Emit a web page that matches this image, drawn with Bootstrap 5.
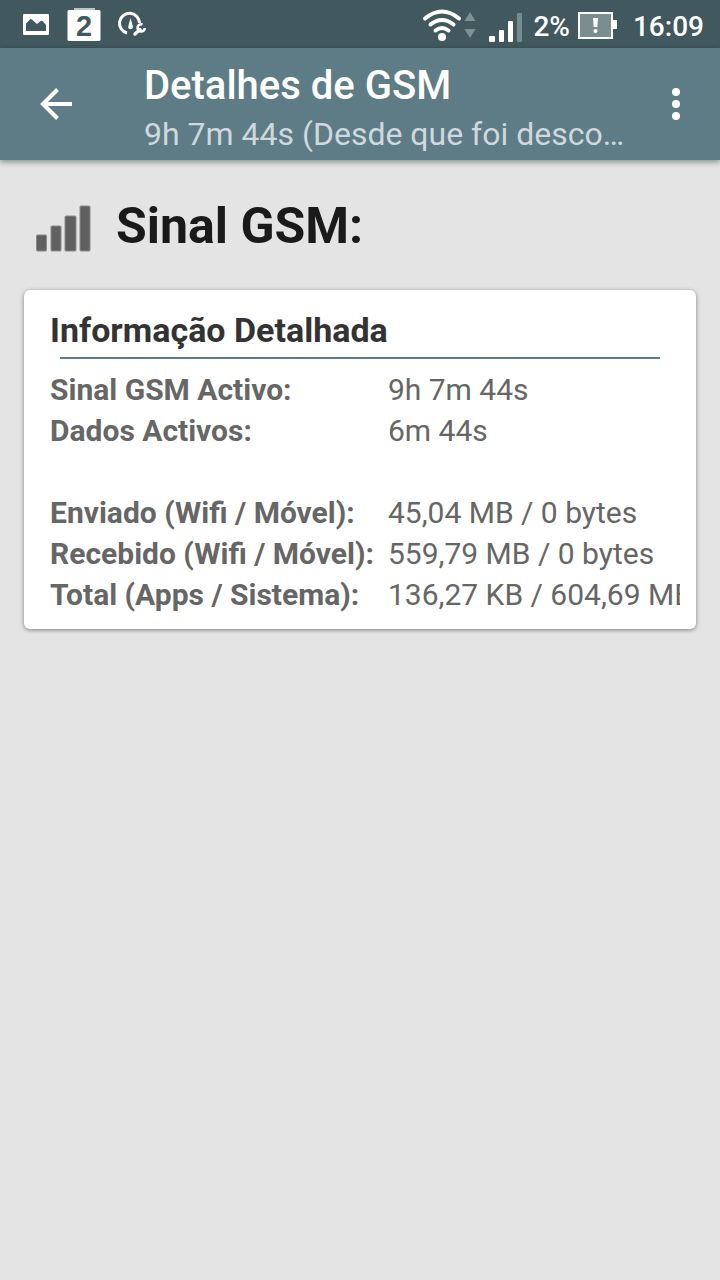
<!DOCTYPE html>
<html lang="pt">
<head>
<meta charset="utf-8">
<meta name="viewport" content="width=device-width, initial-scale=1">
<title>Detalhes de GSM</title>
<link href="https://cdn.jsdelivr.net/npm/bootstrap@5.3.0/dist/css/bootstrap.min.css" rel="stylesheet">
<style>
  body { background: #e4e4e4; font-family: Roboto, "Liberation Sans", sans-serif; color: #666; }
  svg { display: block; flex: none; }
  .status-bar { background: #40585e; color: #fff; height: 48px; padding: 0 16px 0 20px; font-size: 28px; font-weight: 500; }
  .status-text { line-height: 42px; padding-top: 6px; }
  .status-time { margin-left: 15px; }
  .app-bar { background: #5e7c86; height: 112px; box-shadow: 0 2px 6px rgba(0,0,0,.4); padding: 0 16px 0 24px; }
  .icon-btn { padding: 8px; color: #fff; background: none; border: 0; }
  .app-titles { margin-left: 56px; padding-top: 11px; }
  .app-title { font-size: 40px; line-height: 48px; font-weight: 500; color: #fff; }
  .app-subtitle { font-size: 32px; line-height: 48px; color: #cfd8dc; }
  .section-head { padding: 0 12px; margin: 36px 0 34px; gap: 24px; }
  .section-title { font-size: 50px; line-height: 60px; font-weight: 700; color: #1a1a1a; }
  .info-card { border: 0; border-radius: 6px; box-shadow: 0 1px 4px rgba(0,0,0,.45); padding: 20px 16px 14px 26px; }
  .info-title { font-size: 34px; line-height: 41px; font-weight: 700; color: #333; }
  .info-card > .info-rule { border: 0; border-top: 2px solid #5e7c86; opacity: 1; margin: 6px 20px 10px 10px; }
  .info-table { font-size: 30px; line-height: 41px; white-space: nowrap; }
  .info-table th, .info-table td { padding: 0; height: 41px; }
  .info-table th { font-weight: 700; padding-right: 14px; }
</style>
</head>
<body class="min-vh-100">
<div class="status-bar d-flex align-items-center justify-content-between">
  <div class="d-flex align-items-center">
    <svg width="130" height="48" viewBox="20 0 130 48" fill="#fff" role="img" aria-label="Notificações">
      <path fill-rule="evenodd" d="M24 14h24a1 1 0 0 1 1 1v19a1 1 0 0 1-1 1H24a1 1 0 0 1-1-1V15a1 1 0 0 1 1-1zM26 31h20v-6l-3-3.500q-1.500-1.500-3 0l-3 2.500-5-4.500q-1-1-2 0l-4 4z"/>
      <path opacity=".65" d="M74 8h21v2H74z"/>
      <rect x="67.500" y="10" width="33" height="31" rx="1.500"/>
      <text x="84" y="36" text-anchor="middle" font-family="Liberation Sans, sans-serif" font-size="29" font-weight="700" fill="#40585e">2</text>
      <path d="M127 33a10 10 0 1 1 12.500-10" fill="none" stroke="#fff" stroke-width="3"/>
      <path d="M130.500 18l2.300 8a2.400 2.400 0 1 1-4.400 0z"/>
      <path d="M135 34l5-4.500" stroke="#fff" stroke-width="3.500" stroke-linecap="round"/>
      <path d="M142.500 24.500a3.600 3.600 0 1 0 2.300 3.500" fill="none" stroke="#fff" stroke-width="2.600"/>
    </svg>
  </div>
  <div class="d-flex align-items-center">
    <svg width="104" height="48" viewBox="421 0 104 48" role="img" aria-label="Wi-Fi e rede móvel">
      <g fill="none" stroke="#fff" stroke-width="4" stroke-linecap="round">
        <path d="M425 18.500q17-14 34 0"/>
        <path d="M430.500 24.500q11.500-9 23 0"/>
        <path d="M435.500 30.500q6.500-5 13 0"/>
      </g>
      <circle cx="442" cy="37" r="4" fill="#fff"/>
      <path d="M470 12l5.500 9h-11zM470 38l5.500-9h-11z" fill="#7f9195"/>
      <g fill="#fff">
        <rect x="489" y="36" width="6" height="6" rx="1"/>
        <rect x="499" y="30" width="5" height="12" rx="1"/>
        <rect x="508" y="21" width="5" height="21" rx="1"/>
        <rect x="517" y="13" width="5" height="29" rx="1" opacity=".3"/>
      </g>
    </svg>
    <span class="status-text ms-2">2%</span>
    <svg class="ms-2" width="40" height="48" viewBox="578 0 40 48" role="img" aria-label="Bateria fraca">
      <rect x="579" y="13" width="33" height="25" fill="#7b8d91" stroke="#fff" stroke-width="2"/>
      <path d="M613 20h4v9h-4z" fill="#fff"/>
      <path d="M593 18h5l-.7 9h-3.600z" fill="#fff"/>
      <circle cx="595.500" cy="31" r="2" fill="#fff"/>
    </svg>
    <span class="status-text status-time">16:09</span>
  </div>
</div>

<header class="app-bar d-flex align-items-center">
  <button type="button" class="icon-btn" aria-label="Voltar">
    <svg width="48" height="48" viewBox="0 0 48 48" fill="none" stroke="#fff" stroke-width="4"><path d="M40 24H11M25.500 9.500L11 24l14.500 14.500"/></svg>
  </button>
  <div class="app-titles flex-grow-1 overflow-hidden">
    <h1 class="app-title m-0">Detalhes de GSM</h1>
    <div class="app-subtitle text-truncate">9h 7m 44s (Desde que foi desco…</div>
  </div>
  <button type="button" class="icon-btn" aria-label="Mais opções">
    <svg width="40" height="48" viewBox="0 0 40 48" fill="#fff"><circle cx="20" cy="12" r="4"/><circle cx="20" cy="24" r="4"/><circle cx="20" cy="36" r="4"/></svg>
  </button>
</header>

<main class="px-4 pb-4">
  <div class="section-head d-flex align-items-center">
    <svg width="56" height="54" viewBox="0 0 56 54" fill="#606060" stroke="#8a8a8a" aria-hidden="true">
      <rect x="0.500" y="36" width="10" height="16" rx="1"/><rect x="15" y="27" width="10" height="25" rx="1"/><rect x="29" y="17" width="11" height="35" rx="1"/><rect x="44" y="7" width="10" height="45" rx="1"/>
    </svg>
    <h2 class="section-title m-0">Sinal GSM:</h2>
  </div>
  <section class="card info-card">
    <h3 class="info-title m-0">Informação Detalhada</h3>
    <hr class="info-rule">
    <div class="overflow-hidden">
      <table class="info-table">
        <tbody>
          <tr><th scope="row">Sinal GSM Activo:</th><td>9h 7m 44s</td></tr>
          <tr><th scope="row">Dados Activos:</th><td>6m 44s</td></tr>
          <tr><td colspan="2"></td></tr>
          <tr><th scope="row">Enviado (Wifi / Móvel):</th><td>45,04 MB / 0 bytes</td></tr>
          <tr><th scope="row">Recebido (Wifi / Móvel):</th><td>559,79 MB / 0 bytes</td></tr>
          <tr><th scope="row">Total (Apps / Sistema):</th><td>136,27 KB / 604,69 MB</td></tr>
        </tbody>
      </table>
    </div>
  </section>
</main>
<script src="https://cdn.jsdelivr.net/npm/bootstrap@5.3.0/dist/js/bootstrap.bundle.min.js"></script>
</body>
</html>
